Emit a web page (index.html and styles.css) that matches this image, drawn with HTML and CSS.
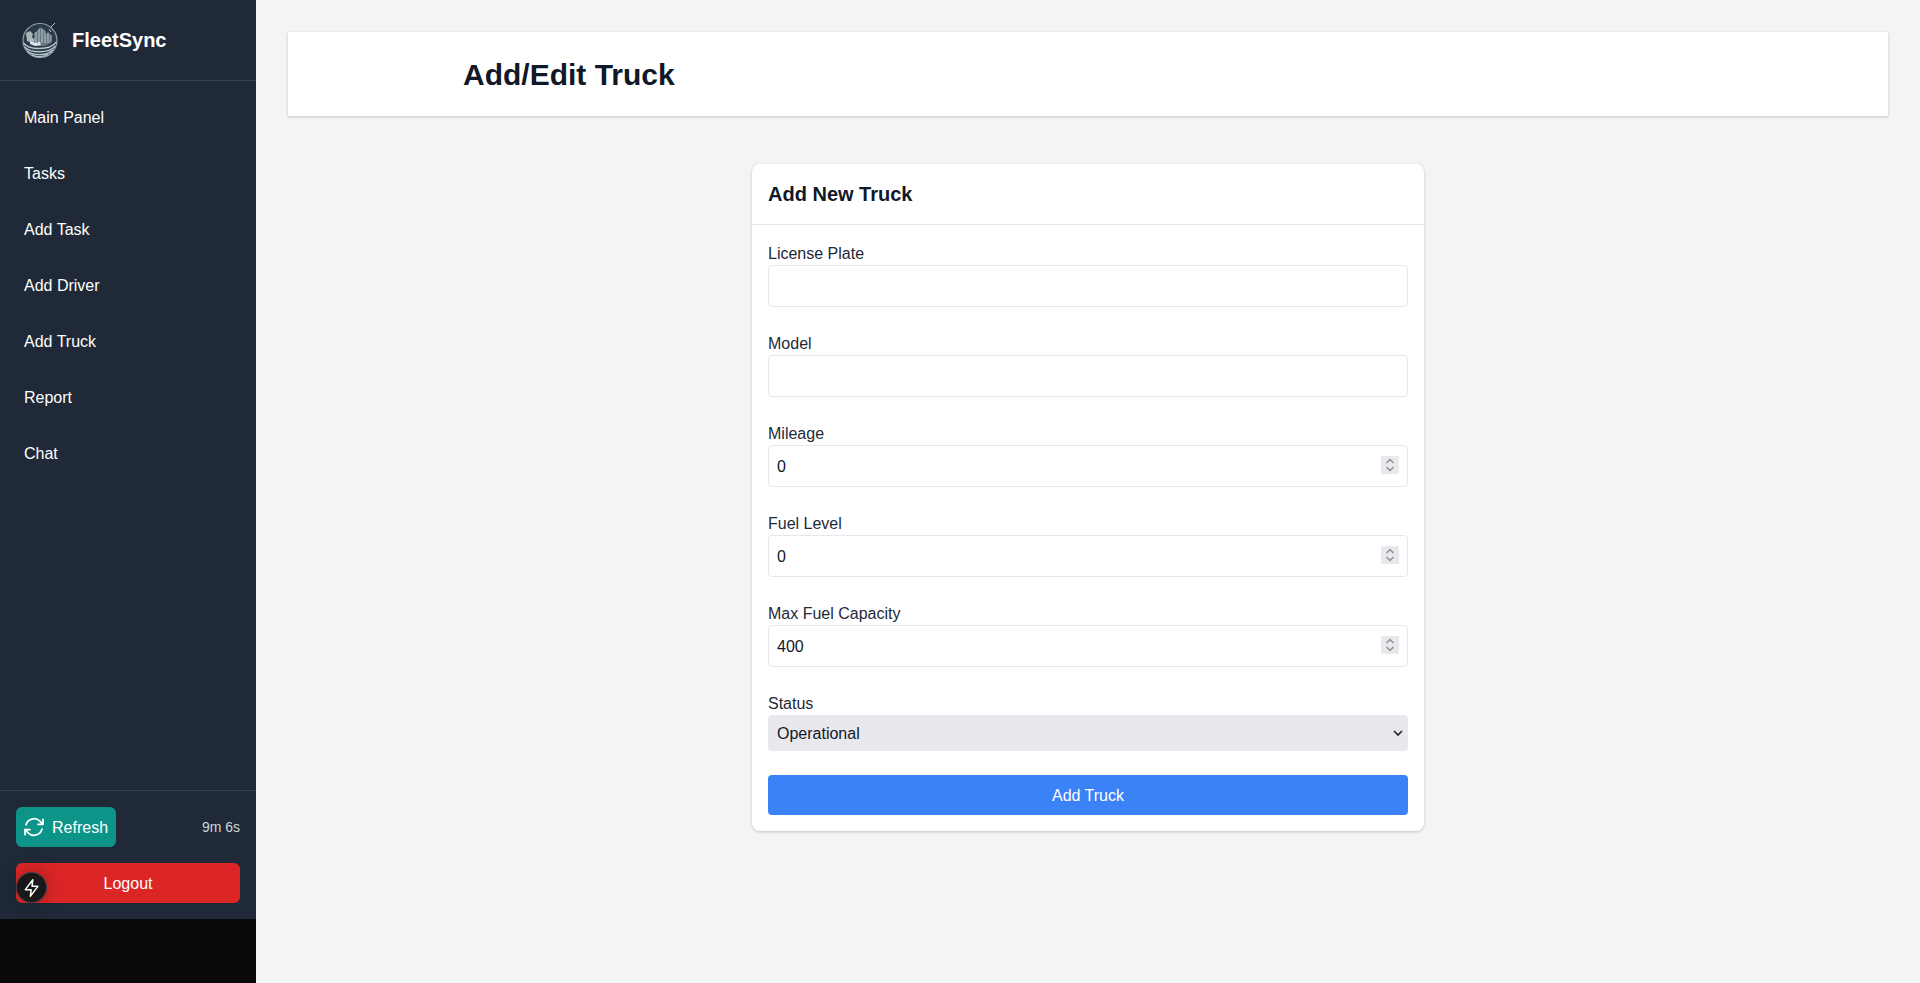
FILE: index.html
```html
<!DOCTYPE html>
<html lang="en">
<head>
    <meta charset="UTF-8">
    <meta name="viewport" content="width=device-width, initial-scale=1.0">
    <title>FleetSync</title>
    <link rel="stylesheet" href="styles.css">
</head>
<body>

<aside class="sidebar">
    <div class="brand">
        <svg class="brand-logo" viewBox="0 0 36 36" fill="none">
            <circle cx="18" cy="18.500" r="17" fill="#2b3a46" stroke="#8b9ea7" stroke-width="1.200"/>
            <path d="M12 20v-9l4-3 2-3 5 3v5l3-3 3 3v8l-6 3H14z" fill="#66777f"/>
            <path d="M14 10v11M17 7v14M20 7v14M23 9v12M26 11v10M29 13v7" stroke="#c3cfd4" stroke-width=".9"/>
            <path d="M4 11l4-2 3 3-1 3 3 3-2 3-6-2z" fill="#a9b7bd"/>
            <path d="M29 5l4-4M27 7l2 3" stroke="#b8c5ca" stroke-width="1"/>
            <path d="M8 19l6 2 4-1 1 3-6 1-5-2z" fill="#dfe6ea"/>
            <path d="M1.500 21c5 7 26 8 33-1M2.500 25c6 6 24 7 31-1M5 29c6 5 20 5 26-1M10 33c5 2 11 2 16-.500" stroke="#b5c5cb" stroke-width="1.300"/>
        </svg>
        <span class="brand-name">FleetSync</span>
    </div>

    <nav class="nav">
        <a href="#">Main Panel</a>
        <a href="#">Tasks</a>
        <a href="#">Add Task</a>
        <a href="#">Add Driver</a>
        <a href="#">Add Truck</a>
        <a href="#">Report</a>
        <a href="#">Chat</a>
    </nav>

    <div class="sidebar-footer">
        <div class="refresh-row">
            <button class="btn-refresh" type="button">
                <svg viewBox="0 0 24 24" width="24" height="24" fill="none" stroke="currentColor" stroke-width="1.800" stroke-linecap="round" stroke-linejoin="round">
                    <path d="M16.023 9.348h4.992v-.001M2.985 19.644v-4.992m0 0h4.992m-4.993 0l3.181 3.183a8.25 8.25 0 0 0 13.803-3.7M4.031 9.865a8.25 8.250 0 0 1 13.803-3.700l3.181 3.182m0-4.991v4.990"/>
                </svg>
                Refresh
            </button>
            <span class="timer">9m 6s</span>
        </div>
        <button class="btn-logout" type="button">Logout</button>
    </div>

    <div class="dev-badge">
        <svg viewBox="0 0 24 24" width="20" height="20" fill="none" stroke="#fff" stroke-width="1.800" stroke-linejoin="round">
            <path d="M13 2L4 14h7l-1 8 9-12h-7z"/>
        </svg>
    </div>
</aside>

<main class="main">
    <header class="page-header">
        <h1>Add/Edit Truck</h1>
    </header>

    <form class="card">
        <h2 class="card-title">Add New Truck</h2>
        <div class="card-body">
            <div class="field">
                <label for="plate">License Plate</label>
                <input type="text" id="plate">
            </div>
            <div class="field">
                <label for="model">Model</label>
                <input type="text" id="model">
            </div>
            <div class="field">
                <label for="mileage">Mileage</label>
                <input type="number" id="mileage" value="0">
            </div>
            <div class="field">
                <label for="fuel">Fuel Level</label>
                <input type="number" id="fuel" value="0">
            </div>
            <div class="field">
                <label for="maxFuel">Max Fuel Capacity</label>
                <input type="number" id="maxFuel" value="400">
            </div>
            <div class="field">
                <label for="status">Status</label>
                <select id="status">
                    <option>Operational</option>
                    <option>Maintenance</option>
                    <option>Out of Service</option>
                </select>
            </div>
            <button class="btn-submit" type="submit">Add Truck</button>
        </div>
    </form>
</main>

</body>
</html>
```

FILE: styles.css
```css
* {
    box-sizing: border-box;
}
html, body {
    height: 100%;
}
body {
    margin: 0;
    display: flex;
    font-family: "Liberation Sans", Arial, sans-serif;
    font-size: 16px;
    line-height: 24px;
    color: #111827;
    background-color: #0a0a0a;
    overflow: hidden;
}
.sidebar {
    position: relative;
    width: 256px;
    height: 919px;
    flex-shrink: 0;
    display: flex;
    flex-direction: column;
    background-color: #1f2937;
    color: white;
}
.brand {
    height: 81px;
    padding: 0 16px 0 22px;
    display: flex;
    align-items: center;
    gap: 14px;
    border-bottom: 1px solid #374151;
}
.brand-logo {
    width: 36px;
    height: 36px;
}
.brand-name {
    font-size: 20px;
    font-weight: bold;
}
.nav {
    flex: 1;
    display: flex;
    flex-direction: column;
    padding-top: 8px;
}
.nav a {
    height: 56px;
    padding: 1px 0 0 24px;
    display: flex;
    align-items: center;
    color: white;
    text-decoration: none;
}
.sidebar-footer {
    padding: 16px;
    border-top: 1px solid #374151;
}
.refresh-row {
    display: flex;
    align-items: center;
    justify-content: space-between;
    margin-bottom: 16px;
}
.btn-refresh {
    height: 40px;
    padding: 1px 8px 0 6px;
    display: flex;
    align-items: center;
    gap: 6px;
    font: inherit;
    color: white;
    background-color: #0d9488;
    border: none;
    border-radius: 6px;
}
.btn-refresh svg {
    margin-top: -1px;
}
.timer {
    font-size: 14px;
    color: #d1d5db;
}
.btn-logout {
    width: 100%;
    height: 40px;
    padding: 1px 0 0;
    font: inherit;
    color: white;
    background-color: #dc2626;
    border: none;
    border-radius: 6px;
}
.dev-badge {
    position: absolute;
    left: 17px;
    top: 873px;
    width: 29px;
    height: 29px;
    display: flex;
    align-items: center;
    justify-content: center;
    background-color: #18181b;
    border-radius: 50%;
    box-shadow: 0 0 0 1px #3f3f46, 0 0 20px rgba(0,0,0,0.3);
}
.main {
    flex: 1;
    height: 983px;
    padding: 32px;
    background-color: #f3f4f6;
}
.page-header {
    height: 84px;
    padding: 1px 0 0 175px;
    display: flex;
    align-items: center;
    background-color: white;
    box-shadow: 0 1px 3px rgba(0,0,0,0.2);
}
h1 {
    margin: 0;
    font-size: 30px;
    line-height: 36px;
    font-weight: bold;
}
.card {
    width: 672px;
    margin: 48px auto 0;
    background-color: white;
    border-radius: 8px;
    box-shadow: 0 1px 3px rgba(0,0,0,0.2);
}
.card-title {
    margin: 0;
    height: 61px;
    padding: 0 16px;
    display: flex;
    align-items: center;
    font-size: 20px;
    font-weight: bold;
    border-bottom: 1px solid #e5e7eb;
}
.card-body {
    padding: 16px;
}
.field {
    margin-bottom: 24px;
}
label {
    display: block;
    height: 24px;
    padding-top: 1px;
    color: #1f2937;
}
input {
    display: block;
    width: 100%;
    height: 42px;
    padding: 9px 8px 7px;
    font: inherit;
    color: #111827;
    background-color: white;
    border: 1px solid #e5e7eb;
    border-radius: 4px;
}
input::-webkit-inner-spin-button {
    -webkit-appearance: none;
    width: 18px;
    height: 18px;
    margin: -2px 0 0;
    opacity: 1;
    background: #e9e8ed url("data:image/svg+xml,%3Csvg xmlns='http://www.w3.org/2000/svg' width='18' height='18' fill='none' stroke='%238a8a94' stroke-width='1.300'%3E%3Cpath d='M5.500 7L9 3.500 12.500 7M5.500 11L9 14.500 12.500 11'/%3E%3C/svg%3E") center no-repeat;
}
select {
    display: block;
    width: 100%;
    height: 36px;
    padding: 1px 24px 0 9px;
    -webkit-appearance: none;
    appearance: none;
    font: inherit;
    color: #111827;
    background: #e9e8ed url("data:image/svg+xml,%3Csvg xmlns='http://www.w3.org/2000/svg' width='10' height='6' fill='none' stroke='%23222230' stroke-width='1.700'%3E%3Cpath d='M1 1l4 4 4-4'/%3E%3C/svg%3E") right 5px center no-repeat;
    border: none;
    border-radius: 4px;
}
.btn-submit {
    display: block;
    width: 100%;
    height: 40px;
    padding: 1px 0 0;
    font: inherit;
    color: white;
    background-color: #3b82f6;
    border: none;
    border-radius: 4px;
}
```
